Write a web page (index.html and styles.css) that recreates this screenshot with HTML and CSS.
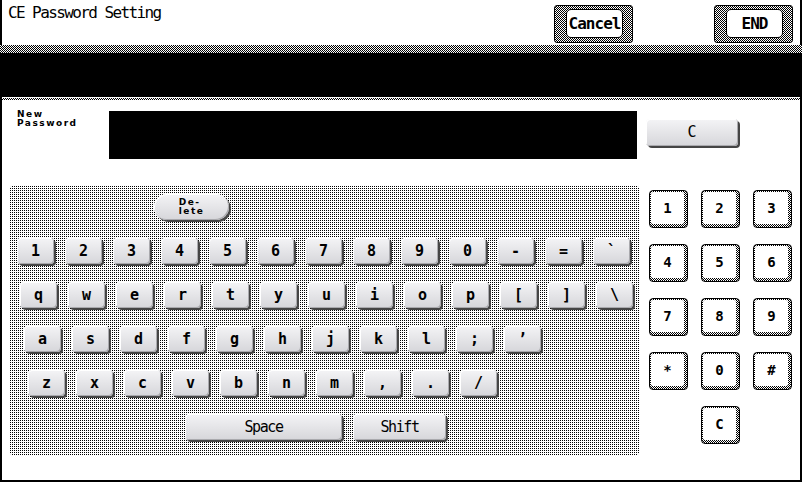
FILE: index.html
```html
<!DOCTYPE html>
<html lang="en">
<head>
    <meta charset="UTF-8">
    <title>CE Password Setting</title>
    <link rel="stylesheet" href="styles.css">
</head>
<body>

<div class="screen">
    <header class="titlebar">
        <h1>CE Password Setting</h1>
        <div class="actions">
            <button class="frame-btn"><span>Cancel</span></button>
            <button class="frame-btn"><span>END</span></button>
        </div>
    </header>

    <div class="band">
        <div class="band-dither"></div>
        <div class="band-fill"></div>
        <div class="band-rule"></div>
    </div>

    <main class="content">
        <div class="entry">
            <div class="entry-label caption">New<br>Password</div>
            <div class="entry-field"></div>
            <button class="key key-clear">C</button>
        </div>

        <div class="lower">
            <!-- text keyboard -->
            <div class="keyboard">
                <div class="kb-top">
                    <button class="key key-delete caption">De-<br>lete</button>
                </div>
                <div class="kb-row row-1">
                    <button class="key">1</button>
                    <button class="key">2</button>
                    <button class="key">3</button>
                    <button class="key">4</button>
                    <button class="key">5</button>
                    <button class="key">6</button>
                    <button class="key">7</button>
                    <button class="key">8</button>
                    <button class="key">9</button>
                    <button class="key">0</button>
                    <button class="key">-</button>
                    <button class="key">=</button>
                    <button class="key">`</button>
                </div>
                <div class="kb-row row-2">
                    <button class="key">q</button>
                    <button class="key">w</button>
                    <button class="key">e</button>
                    <button class="key">r</button>
                    <button class="key">t</button>
                    <button class="key">y</button>
                    <button class="key">u</button>
                    <button class="key">i</button>
                    <button class="key">o</button>
                    <button class="key">p</button>
                    <button class="key">[</button>
                    <button class="key">]</button>
                    <button class="key">\</button>
                </div>
                <div class="kb-row row-3">
                    <button class="key">a</button>
                    <button class="key">s</button>
                    <button class="key">d</button>
                    <button class="key">f</button>
                    <button class="key">g</button>
                    <button class="key">h</button>
                    <button class="key">j</button>
                    <button class="key">k</button>
                    <button class="key">l</button>
                    <button class="key">;</button>
                    <button class="key">’</button>
                </div>
                <div class="kb-row row-4">
                    <button class="key">z</button>
                    <button class="key">x</button>
                    <button class="key">c</button>
                    <button class="key">v</button>
                    <button class="key">b</button>
                    <button class="key">n</button>
                    <button class="key">m</button>
                    <button class="key">,</button>
                    <button class="key">.</button>
                    <button class="key">/</button>
                </div>
                <div class="kb-row row-5">
                    <button class="key key-space">Space</button>
                    <button class="key key-shift">Shift</button>
                </div>
            </div>

            <!-- ten key pad -->
            <div class="numpad">
                <button class="pad-key"><span>1</span></button>
                <button class="pad-key"><span>2</span></button>
                <button class="pad-key"><span>3</span></button>
                <button class="pad-key"><span>4</span></button>
                <button class="pad-key"><span>5</span></button>
                <button class="pad-key"><span>6</span></button>
                <button class="pad-key"><span>7</span></button>
                <button class="pad-key"><span>8</span></button>
                <button class="pad-key"><span>9</span></button>
                <button class="pad-key"><span>*</span></button>
                <button class="pad-key"><span>0</span></button>
                <button class="pad-key"><span>#</span></button>
                <button class="pad-key pad-clear"><span>C</span></button>
            </div>
        </div>
    </main>
</div>

</body>
</html>
```

FILE: styles.css
```css
* {
    box-sizing: border-box;
}
body {
    margin: 0;
    background: #fff;
    color: #000;
    font-family: "DejaVu Sans Mono", monospace;
}
button {
    margin: 0;
    padding: 0;
    border: 0;
    font: inherit;
    color: inherit;
    cursor: pointer;
}

.screen {
    width: 802px;
    height: 482px;
    border: 2px solid #000;
    border-top: 0;
}

/* title bar */
.titlebar {
    height: 45px;
    display: flex;
    justify-content: space-between;
    align-items: flex-start;
}
.titlebar h1 {
    margin: 0;
    padding: 3px 0 0 6px;
    font-size: 16px;
    line-height: 19px;
    font-weight: normal;
    letter-spacing: -1.6px;
}
.actions {
    display: flex;
    gap: 81px;
    padding: 5px 7px 0 0;
}
.frame-btn {
    display: block;
    width: 79px;
    height: 38px;
    border: 1px solid #000;
    border-radius: 3px;
    padding: 3px 9px 4px 11px;
    background: repeating-conic-gradient(#000 0 25%, #fff 0 50%) 0 0 / 2px 2px;
}
.frame-btn span {
    display: flex;
    height: 100%;
    align-items: center;
    justify-content: center;
    background: #fff;
    border: 1px solid #000;
    border-radius: 5px;
    font-size: 16px;
    font-weight: bold;
    letter-spacing: -1px;
}

/* dark band under the title */
.band {
    margin: 0 -2px;
}
.band-dither {
    height: 8px;
    background: repeating-conic-gradient(#000 0 25%, #fff 0 50%) 0 0 / 2px 2px;
}
.band-fill {
    height: 44px;
    background: #000;
}
.band-rule {
    height: 2px;
    margin: 1px 2px 0;
    background: repeating-conic-gradient(#000 0 25%, #fff 0 50%) 0 0 / 2px 2px;
}

.content {
    padding: 10px 0 0 7px;
}

/* password entry */
.entry {
    display: flex;
    align-items: flex-start;
    padding-left: 8px;
}
.entry-label {
    width: 92px;
}
.entry-field {
    width: 528px;
    height: 48px;
    margin-top: 1px;
    background: #000;
}

/* grey keys */
.key {
    display: flex;
    align-items: center;
    justify-content: center;
    width: 37px;
    height: 26px;
    border-radius: 4px;
    background: linear-gradient(#f4f4f6, #d6d6da);
    box-shadow: 2px 2px 0 #454545, inset -1px -1px 0 #a9a9ad, inset 1px 1px 0 #fff;
    font-size: 15px;
    font-weight: bold;
    line-height: 1;
}
.key-clear {
    width: 92px;
    height: 27px;
    margin: 9px 0 0 9px;
    font-weight: normal;
}

.lower {
    display: flex;
    margin-top: 26px;
}

/* keyboard panel */
.keyboard {
    width: 631px;
    height: 271px;
    padding-top: 9px;
    border-radius: 6px;
    background: conic-gradient(from 90deg at 1px 1px, #000 25%, #fff 0) 0 0 / 2px 2px;
}
.kb-top {
    padding-left: 145px;
}
.key-delete {
    width: 75px;
    border-radius: 13px;
    text-align: left;
}
.kb-row {
    display: flex;
    gap: 11px;
    margin-top: 18px;
}
.row-1 { padding-left: 8px; }
.row-2 { padding-left: 11px; }
.row-3 { padding-left: 15px; }
.row-4 { padding-left: 19px; }
.row-5 { padding-left: 176px; }

.key-space,
.key-shift {
    font-weight: normal;
    letter-spacing: -1.4px;
}
.key-space { width: 157px; }
.key-shift { width: 93px; }

/* small two-line captions */
.caption {
    font-family: "DejaVu Sans", sans-serif;
    font-size: 9px;
    line-height: 9px;
    font-weight: bold;
    letter-spacing: 1.5px;
}

/* ten key pad */
.numpad {
    display: grid;
    grid-template-columns: repeat(3, 39px);
    grid-auto-rows: 38px;
    column-gap: 13px;
    row-gap: 16px;
    align-content: start;
    margin-left: 9px;
    padding-top: 5px;
}
.pad-key {
    border: 1px solid #000;
    border-radius: 4px;
    padding: 1px 3px 3px 1px;
    background: repeating-conic-gradient(#000 0 25%, #fff 0 50%) 0 0 / 2px 2px;
}
.pad-key span {
    display: flex;
    height: 100%;
    align-items: center;
    justify-content: center;
    background: #fff;
    border-radius: 2px;
    font-size: 14px;
    font-weight: bold;
}
.pad-clear {
    grid-column: 2;
}
```
